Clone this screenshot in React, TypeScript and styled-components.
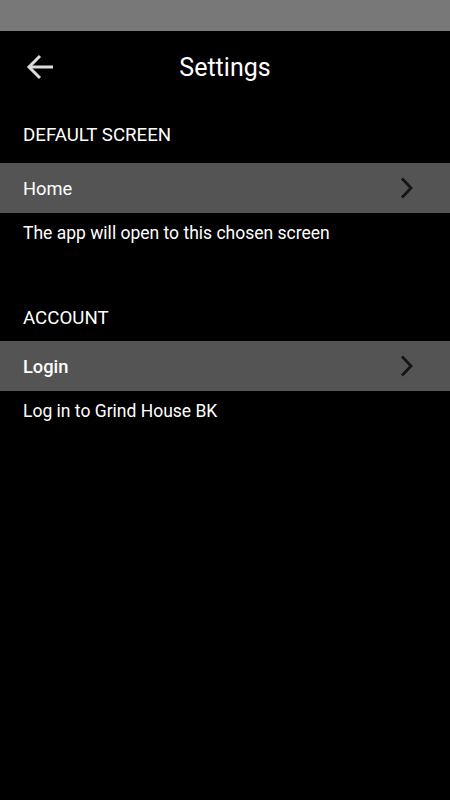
import React from 'react';
import styled, { createGlobalStyle } from 'styled-components';

const GlobalStyle = createGlobalStyle`
  html, body {
    margin: 0;
    padding: 0;
    background: #000;
  }
  body {
    font-family: Roboto, 'Liberation Sans', sans-serif;
    -webkit-font-smoothing: antialiased;
  }
`;

const Screen = styled.div`
  width: 450px;
  height: 800px;
  background: #000;
  color: #fff;
  display: flex;
  flex-direction: column;
  overflow: hidden;
`;

const StatusBar = styled.div`
  height: 31px;
  background: #787878;
  flex-shrink: 0;
`;

const Header = styled.header`
  height: 72px;
  display: grid;
  grid-template-columns: 90px 1fr 90px;
  align-items: center;
`;

const BackButton = styled.button`
  justify-self: start;
  margin-left: 26px;
  padding: 0;
  border: none;
  background: none;
  display: flex;
  cursor: pointer;
`;

const Title = styled.h1`
  margin: 0;
  padding-top: 2px;
  text-align: center;
  font-size: 25px;
  font-weight: 400;
  line-height: 28px;
`;

const SectionTitle = styled.div<{ $top: number; $bottom: number }>`
  padding: ${(p) => p.$top}px 23px ${(p) => p.$bottom}px;
  font-size: 18.7px;
  line-height: 22px;
  text-transform: uppercase;
`;

const Row = styled.div<{ $bold?: boolean }>`
  height: 50px;
  background: #545454;
  display: flex;
  align-items: center;
  justify-content: space-between;
  padding: 0 36px 0 23px;
  font-size: 18.3px;
  font-weight: ${(p) => (p.$bold ? 500 : 400)};
`;

const Description = styled.div`
  padding: 9px 23px 0;
  font-size: 17.5px;
  line-height: 22px;
`;

const BackArrow = () => (
  <svg width="28" height="28" viewBox="0 0 28 28" fill="none">
    <path d="M27 14H3" stroke="#dcdcdc" strokeWidth="3" />
    <path d="M14 3L3 14L14 25" stroke="#dcdcdc" strokeWidth="3" />
  </svg>
);

const Chevron = () => (
  <svg width="14" height="22" viewBox="0 0 14 22" fill="none">
    <path d="M2 1.5L11 11L2 20.5" stroke="#151515" strokeWidth="2.8" />
  </svg>
);

export default function App() {
  return (
    <>
      <GlobalStyle />
      <Screen>
        <StatusBar />
        <Header>
          <BackButton aria-label="Back">
            <BackArrow />
          </BackButton>
          <Title>Settings</Title>
          <span />
        </Header>

        <SectionTitle $top={21} $bottom={17}>Default Screen</SectionTitle>
        <Row>
          Home
          <Chevron />
        </Row>
        <Description>The app will open to this chosen screen</Description>

        <SectionTitle $top={63} $bottom={12}>Account</SectionTitle>
        <Row $bold>
          Login
          <Chevron />
        </Row>
        <Description>Log in to Grind House BK</Description>
      </Screen>
    </>
  );
}
